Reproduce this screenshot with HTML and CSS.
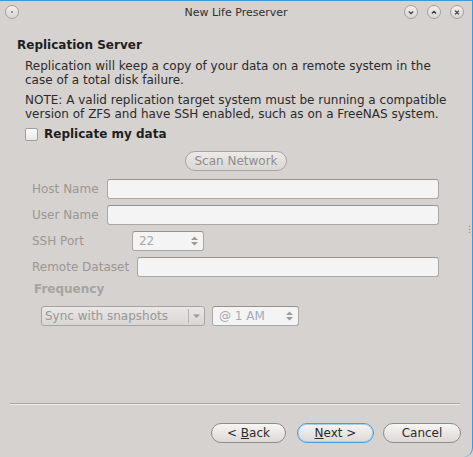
FILE: index.html
```html
<!DOCTYPE html>
<html>
<head>
<meta charset="utf-8">
<link rel="stylesheet" href="styles.css">
</head>
<body>
<div class="window">
  <div class="titlebar">
    <span class="tb-btn tb-menu"><span class="dot"></span></span>
    <span class="title">New Life Preserver</span>
    <span class="tb-right">
      <span class="tb-btn"><svg width="13" height="13" viewBox="0 0 13 13"><path d="M4.2 5.4 L6.5 7.7 L8.8 5.4" fill="none" stroke="#3a3a3a" stroke-width="1.3"/></svg></span>
      <span class="tb-btn"><svg width="13" height="13" viewBox="0 0 13 13"><path d="M4.2 7.6 L6.5 5.3 L8.8 7.6" fill="none" stroke="#3a3a3a" stroke-width="1.3"/></svg></span>
      <span class="tb-btn"><svg width="13" height="13" viewBox="0 0 13 13"><path d="M4.4 4.4 L8.6 8.6 M8.6 4.4 L4.4 8.6" fill="none" stroke="#3a3a3a" stroke-width="1.3"/></svg></span>
    </span>
  </div>
  <div class="content">
    <div class="heading">Replication Server</div>
    <p class="para">Replication will keep a copy of your data on a remote system in the<br>case of a total disk failure.</p>
    <p class="para">NOTE: A valid replication target system must be running a compatible<br>version of ZFS and have SSH enabled, such as on a FreeNAS system.</p>
    <div class="check-row"><span class="checkbox"></span><span class="check-label">Replicate my data</span></div>
    <div class="scan-row"><span class="btn disabled scan">Scan Network</span></div>
    <div class="form">
      <div class="row"><span class="lbl">Host Name</span><span class="input grow"></span></div>
      <div class="row"><span class="lbl">User Name</span><span class="input grow"></span></div>
      <div class="row"><span class="lbl">SSH Port</span><span class="spin port"><span class="spin-text">22</span><span class="arrows"><svg width="9" height="12" viewBox="0 0 9 12"><path d="M1 5 L4.5 1.5 L8 5 Z M1 7 L4.5 10.5 L8 7 Z" fill="#9c9a98"/></svg></span></span></div>
      <div class="row"><span class="lbl">Remote Dataset</span><span class="input grow"></span></div>
    </div>
    <div class="freq">Frequency</div>
    <div class="freq-row">
      <span class="combo"><span class="combo-text">Sync with snapshots</span><span class="combo-arrow"><svg width="9" height="6" viewBox="0 0 9 6"><path d="M1 1.5 L4.5 5 L8 1.5 Z" fill="#9c9a98"/></svg></span></span>
      <span class="spin time"><span class="spin-text">@ 1 AM</span><span class="arrows"><svg width="9" height="12" viewBox="0 0 9 12"><path d="M1 5 L4.5 1.5 L8 5 Z M1 7 L4.5 10.5 L8 7 Z" fill="#9c9a98"/></svg></span></span>
    </div>
    <div class="spacer"></div>
    <div class="separator"></div>
    <div class="buttons">
      <span class="btn back"><span>&lt;&nbsp;<u>B</u>ack</span></span>
      <span class="btn next"><span><u>N</u>ext&nbsp;&gt;</span></span>
      <span class="btn cancel">Cancel</span>
    </div>
  </div>
  <span class="grip">⋮</span>
</div>
</body>
</html>
```
FILE: styles.css
```css
* { box-sizing: border-box; }
html, body { margin: 0; padding: 0; }
body {
  width: 473px;
  height: 457px;
  overflow: hidden;
  background: #d6d2d0;
  font-family: "DejaVu Sans", sans-serif;
  font-size: 12px;
  color: #2b2b2b;
}
.window {
  position: relative;
  width: 473px;
  height: 457px;
  border-top: 1px solid #3d9ad8;
  border-right: 1px solid #3d9ad8;
  border-bottom-right-radius: 9px;
  background: #d6d2d0;
  display: flex;
  flex-direction: column;
}
.titlebar {
  height: 22px;
  display: flex;
  align-items: center;
  padding: 0 8px 0 5px;
  position: relative;
}
.title {
  position: absolute;
  left: 0; right: 0;
  text-align: center;
  font-size: 11px;
  color: #2f2f2f;
  pointer-events: none;
}
.tb-right { margin-left: auto; display: flex; gap: 9px; }
.tb-btn {
  width: 14px; height: 14px;
  border-radius: 50%;
  border: 1px solid #a3a09d;
  background: linear-gradient(#f2f1f0, #d8d5d3);
  display: flex; align-items: center; justify-content: center;
}
.tb-btn svg { display: block; }
.tb-menu .dot { width: 2px; height: 2px; background: #777; border-radius: 50%; }
.content {
  flex: 1;
  display: flex;
  flex-direction: column;
  padding: 14px 11px 14px 17px;
}
.heading {
  font-weight: bold;
  font-size: 12px;
  line-height: 16px;
  color: #1e1e1e;
}
.para {
  margin: 6px 0 0 8px;
  line-height: 14px;
  white-space: nowrap;
  color: #2b2b2b;
}
.check-row {
  margin: 5px 0 0 8px;
  height: 16px;
  display: flex;
  align-items: center;
  gap: 6px;
}
.checkbox {
  width: 13px; height: 13px;
  border: 1px solid #a09d9a;
  border-radius: 2px;
  background: linear-gradient(#fbfbfb, #e9e8e7);
}
.check-label { font-weight: bold; font-size: 12px; color: #1e1e1e; }
.scan-row { margin-top: 9px; display: flex; padding-left: 168px; }
.btn {
  height: 20px;
  border: 1px solid #8f8c89;
  border-radius: 10px;
  background: linear-gradient(#f6f6f5, #dcd9d7);
  display: flex; align-items: center; justify-content: center;
  color: #2b2b2b;
}
.btn.disabled { color: #8f8c8a; border-color: #a7a4a1; background: linear-gradient(#ecebea, #d9d6d4); }
.scan { width: 102px; }
.form { margin: 8px 0 0 15px; display: flex; flex-direction: column; gap: 6px; }
.row { display: flex; align-items: center; height: 20px; gap: 8px; }
.lbl { color: #9a9794; }
.input, .spin {
  height: 20px;
  border: 1px solid #aaa7a4;
  border-top-color: #96938f;
  border-radius: 3px;
  background: #f4f4f4;
}
.grow { width: 332px; }
.row:last-child .grow { width: 302px; }
.spin { display: flex; align-items: center; padding: 0 4px 0 6px; color: #a3aab2; }
.spin-text { flex: 1; }
.arrows { display: flex; }
.port { width: 72px; margin-left: 40px; }
.freq { margin: 4px 0 0 17px; font-weight: bold; font-size: 12px; line-height: 16px; color: #a7a3a0; }
.freq-row { margin: 9px 0 0 24px; display: flex; gap: 7px; }
.combo {
  width: 164px; height: 20px;
  border: 1px solid #a7a4a1;
  border-radius: 3px;
  background: linear-gradient(#e9e8e7, #d9d6d4);
  display: flex; align-items: center;
  color: #9a9794;
}
.combo-text { flex: 1; padding-left: 3px; }
.combo-arrow {
  width: 16px; height: 14px;
  border-left: 1px solid #b5b2af;
  display: flex; align-items: center; justify-content: center;
}
.time { width: 87px; }
.spacer { flex: 1; }
.separator { height: 1px; background: #a9a6a3; border-bottom: 1px solid #ecebea; box-sizing: content-box; margin: 0 1px 0 -7px; }
.buttons { margin-top: 18px; display: flex; justify-content: flex-end; }
.back { width: 75px; }
.next { width: 77px; margin-left: 11px; border-color: #4a9fd6; box-shadow: inset 0 0 0 1px #a8d0ec; }
.cancel { width: 78px; margin-left: 9px; }
.grip { position: absolute; right: -2px; top: 223px; font-size: 9px; color: #8a8a8a; line-height: 10px; }
```
